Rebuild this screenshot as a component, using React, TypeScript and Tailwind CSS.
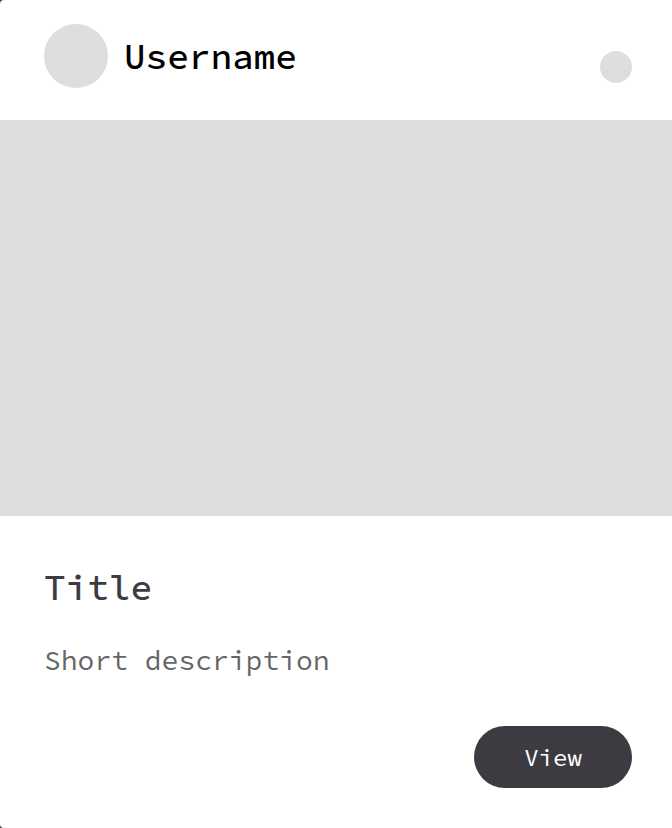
export default function App() {
  return (
    <div className="bg-[#3d3b42] font-['Source_Code_Pro','Liberation_Mono',monospace]">
      <article className="flex min-h-screen flex-col rounded-l-sm bg-white">
        <header className="flex h-[120px] items-center justify-between pr-10 pl-11">
          <div className="flex items-center gap-4 pb-2">
            <span className="size-16 rounded-full bg-[#dedede]" />
            <h2 className="pt-0.5 text-[36px] leading-[44px] font-medium text-black">Username</h2>
          </div>
          <button type="button" aria-label="More options" className="mt-[14px] size-8 rounded-full bg-[#dedede]" />
        </header>
        <div className="h-[396px] bg-[#dedede]" />
        <section className="flex flex-1 flex-col pt-[50px] pr-10 pb-10 pl-11">
          <h1 className="text-[36px] leading-[44px] font-medium text-[#3d3b42]">Title</h1>
          <p className="mt-8 text-[28px] leading-9 text-[#666666]">Short description</p>
          <button type="button" className="mt-auto h-[62px] w-[158px] self-end rounded-full bg-[#3d3b42] pt-0.5 text-2xl text-white">
            View
          </button>
        </section>
      </article>
    </div>
  );
}
